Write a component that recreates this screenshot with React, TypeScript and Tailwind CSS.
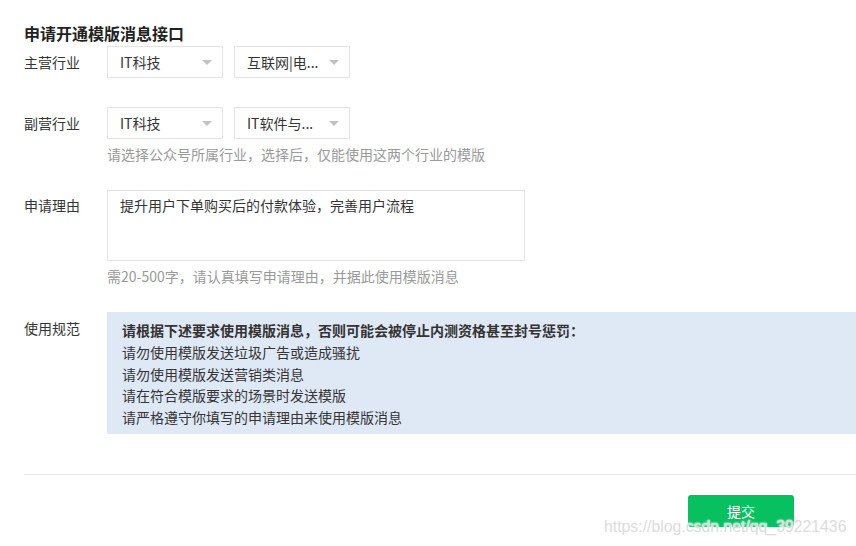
const FONT = { fontFamily: '"Microsoft YaHei", "Noto Sans CJK SC", "Noto Sans", sans-serif' };

function Select({ value }: { value: string }) {
  return (
    <div className="flex h-8 w-[116px] items-center justify-between border border-[#e4e4e4] bg-white pl-3 pr-[10px] text-sm text-[#353535]">
      <span className="whitespace-nowrap">{value}</span>
      <svg width="10" height="5" viewBox="0 0 10 5" className="shrink-0">
        <path d="M0 0 L10 0 L5 5 Z" fill="#c2c2c2" />
      </svg>
    </div>
  );
}

const rules = [
  '请勿使用模版发送垃圾广告或造成骚扰',
  '请勿使用模版发送营销类消息',
  '请在符合模版要求的场景时发送模版',
  '请严格遵守你填写的申请理由来使用模版消息',
];

export default function App() {
  return (
    <div className="relative h-[546px] w-[856px] overflow-hidden bg-white pl-6 text-sm text-[#353535]" style={FONT}>
      <h1 className="pt-[23px] text-base font-bold leading-[20px] text-[#222]">申请开通模版消息接口</h1>

      {/* 主营行业 */}
      <div className="mt-[3px] flex items-center">
        <div className="w-[83px] leading-5">主营行业</div>
        <div className="flex gap-[11px]">
          <Select value="IT科技" />
          <Select value="互联网|电..." />
        </div>
      </div>

      {/* 副营行业 */}
      <div className="mt-[29px] flex items-center">
        <div className="w-[83px] leading-5">副营行业</div>
        <div className="flex gap-[11px]">
          <Select value="IT科技" />
          <Select value="IT软件与..." />
        </div>
      </div>
      <div className="ml-[83px] mt-[5px] leading-5 text-[#9a9a9a]">请选择公众号所属行业，选择后，仅能使用这两个行业的模版</div>

      {/* 申请理由 */}
      <div className="mt-[26px] flex">
        <div className="w-[83px] pt-[5px] leading-5">申请理由</div>
        <div className="h-[71px] w-[418px] border border-[#e4e4e4] px-3 pt-[4px] leading-5">
          提升用户下单购买后的付款体验，完善用户流程
        </div>
      </div>
      <div className="ml-[83px] mt-[5px] leading-5 text-[#9a9a9a]">需20-500字，请认真填写申请理由，并据此使用模版消息</div>

      {/* 使用规范 */}
      <div className="mt-[26px] flex">
        <div className="w-[83px] pt-[6px] leading-5">使用规范</div>
        <div className="flex-1 bg-[#dfe8f5] pb-[5px] pl-[15px] pt-[8px] leading-[21.75px]">
          <div className="font-bold text-[#333]">请根据下述要求使用模版消息，否则可能会被停止内测资格甚至封号惩罚：</div>
          {rules.map((r) => (
            <div key={r}>{r}</div>
          ))}
        </div>
      </div>

      <div className="mt-[40px] h-px bg-[#e7e7e7]" />

      <div className="mt-[20px] flex">
        <button className="ml-[664px] h-8 w-[106px] rounded-[3px] bg-[#07c160] text-sm text-white">提交</button>
      </div>

      <div
        className="absolute left-[604px] top-[517px] whitespace-nowrap text-[15.8px] leading-5 text-[#dcdcdc]"
        style={{ fontFamily: '"Liberation Sans", Arial, sans-serif', textShadow: '0 0 2px #fff, 0 0 2px #fff' }}
      >
        https://blog.csdn.net/qq_39221436
      </div>
    </div>
  );
}
